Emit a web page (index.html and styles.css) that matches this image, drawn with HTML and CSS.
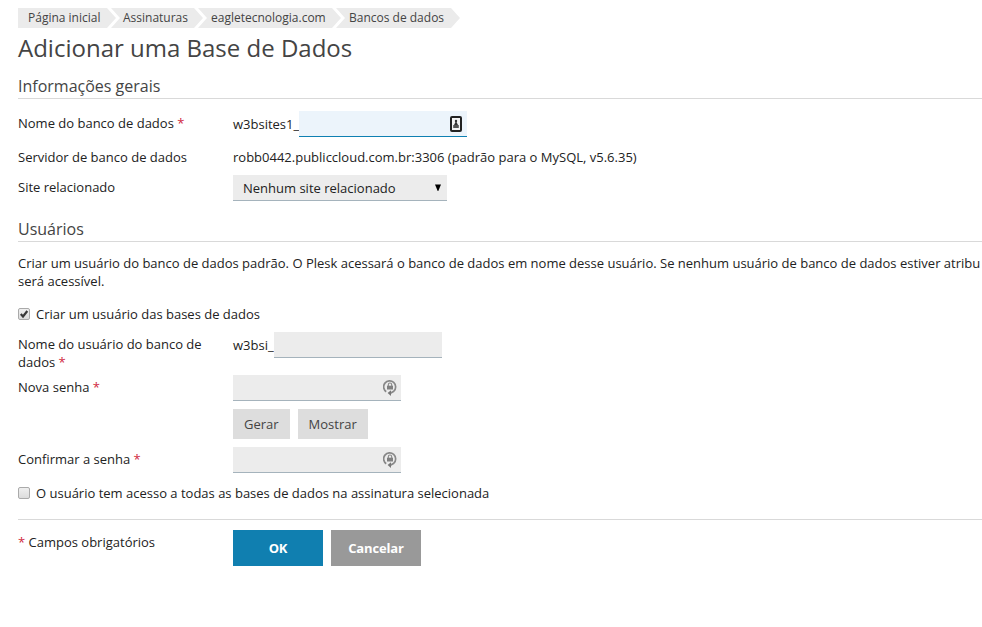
FILE: index.html
```html
<!DOCTYPE html>
<html lang="pt-BR">
<head>
<meta charset="utf-8">
<title>Adicionar uma Base de Dados</title>
<link rel="stylesheet" href="styles.css">
</head>
<body>
<nav class="crumbs">
  <a class="crumb crumb-home">Página inicial</a>
  <a class="crumb crumb-subs">Assinaturas</a>
  <a class="crumb crumb-site">eagletecnologia.com</a>
  <a class="crumb crumb-db">Bancos de dados</a>
</nav>
<h1>Adicionar uma Base de Dados</h1>
<form>
  <section class="general">
    <h2>Informações gerais</h2>
    <div class="row row-name">
      <label class="label">Nome do banco de dados <span class="req">*</span></label>
      <div class="value"><span class="prefix">w3bsites1_</span><span class="field focused">
        <svg class="id-icon" viewBox="0 0 12 16"><rect x="1" y="1" width="10" height="14" rx="1" fill="#f4f4f4" stroke="#222" stroke-width="2"/><circle cx="6" cy="5" r="1.2" fill="#333"/><path d="M6 5 8 9H4z" fill="#333"/><path d="M3.2 9h5.6v3H3.2z" fill="#555"/></svg>
      </span></div>
    </div>
    <div class="row row-server">
      <span class="label">Servidor de banco de dados</span>
      <div class="value">robb0442.publiccloud.com.br:3306 (padrão para o MySQL, v5.6.35)</div>
    </div>
    <div class="row row-site">
      <label class="label">Site relacionado</label>
      <div class="select"><span>Nenhum site relacionado</span><svg class="arrow" viewBox="0 0 6 7"><path d="M0 .5h6L3.3 7h-.6z"/></svg></div>
    </div>
  </section>
  <section class="users">
    <h2>Usuários</h2>
    <p class="hint"><span>Criar um usuário do banco de dados padrão. O Plesk acessará o banco de dados em nome desse usuário. Se nenhum usuário de banco de dados estiver atribu</span><br>será acessível.</p>
    <label class="check"><span class="box"><svg viewBox="0 0 12 12"><path d="M2.8 6 5 8.5 9.3 3" fill="none" stroke="#383838" stroke-width="2.2"/></svg></span>Criar um usuário das bases de dados</label>
    <div class="row row-user">
      <label class="label">Nome do usuário do banco de dados <span class="req">*</span></label>
      <div class="value"><span class="prefix">w3bsi_</span><span class="field"></span></div>
    </div>
    <div class="row row-pass">
      <label class="label">Nova senha <span class="req">*</span></label>
      <div class="value"><span class="field secret">
        <svg class="lock-icon" viewBox="0 0 14 17"><path d="M3.2 12.8A6 6 0 1 1 10.8 12.2L7 14.5" fill="none" stroke="#888" stroke-width="1.7"/><path d="M8 11.2V17l-3.4-2.9z" fill="#777"/><path d="M5.3 7V5.7a1.7 1.7 0 0 1 3.4 0V7" fill="none" stroke="#888" stroke-width="1.1"/><path d="M4 6.7h6v3.8H4z" fill="#808080"/></svg>
      </span></div>
    </div>
    <div class="tools"><button type="button">Gerar</button><button type="button">Mostrar</button></div>
    <div class="row row-confirm">
      <label class="label">Confirmar a senha <span class="req">*</span></label>
      <div class="value"><span class="field secret">
        <svg class="lock-icon" viewBox="0 0 14 17"><path d="M3.2 12.8A6 6 0 1 1 10.8 12.2L7 14.5" fill="none" stroke="#888" stroke-width="1.7"/><path d="M8 11.2V17l-3.4-2.9z" fill="#777"/><path d="M5.3 7V5.7a1.7 1.7 0 0 1 3.4 0V7" fill="none" stroke="#888" stroke-width="1.1"/><path d="M4 6.7h6v3.8H4z" fill="#808080"/></svg>
      </span></div>
    </div>
    <label class="check"><span class="box"></span>O usuário tem acesso a todas as bases de dados na assinatura selecionada</label>
  </section>
  <footer class="row">
    <span class="label"><span class="req">*</span> Campos obrigatórios</span>
    <div class="actions"><button type="button" class="ok">OK</button><button type="button" class="cancel">Cancelar</button></div>
  </footer>
</form>
</body>
</html>
```
FILE: styles.css
```css
* { box-sizing: border-box; }
body {
  margin: 0;
  padding: 8px 0 0 18px;
  overflow: hidden;
  background: #fff;
  color: #222;
  font: 13px/18px "Open Sans", sans-serif;
}
.crumbs { display: flex; height: 20px; }
.crumb {
  height: 20px;
  padding-left: 13px;
  margin-left: -5px;
  background: #ebebeb;
  color: #444;
  font-size: 12px;
  line-height: 20px;
  white-space: nowrap;
  clip-path: polygon(0 0, calc(100% - 9px) 0, 100% 50%, calc(100% - 9px) 100%, 0 100%, 9px 50%);
}
.crumb-home {
  width: 98px;
  margin-left: 0;
  padding-left: 10px;
  clip-path: polygon(0 0, calc(100% - 9px) 0, 100% 50%, calc(100% - 9px) 100%, 0 100%);
}
.crumb-subs { width: 92px; padding-left: 12px; }
.crumb-site { width: 143px; }
.crumb-db { width: 124px; }
h1 {
  margin: 3px 0 0;
  color: #444;
  font-size: 24px;
  font-weight: 400;
  line-height: 34px;
}
h2 {
  width: 964px;
  height: 25px;
  margin: 0;
  border-bottom: 1px solid #d9d9d9;
  color: #444;
  font-size: 16px;
  font-weight: 400;
  line-height: 24px;
}
.general { margin-top: 9px; }
.row { display: flex; }
.label { width: 215px; padding-right: 20px; }
.value { display: flex; }
.req { color: #d02840; }
.prefix { line-height: 27px; }
.field {
  display: flex;
  justify-content: flex-end;
  width: 168px;
  height: 26px;
  padding: 5px 5px 0;
  background: #ececec;
  border-bottom: 1px solid #a5b3bc;
}
.focused { background: #ecf4fb; border-color: #0f80b2; }
.secret { padding: 4px 4px 0; }
.id-icon { width: 12px; height: 16px; }
.lock-icon { width: 14px; height: 17px; }
.row-name { margin-top: 12px; height: 26px; }
.row-name .label { padding-top: 3px; }
.row-server { margin-top: 11px; }
.row-site { margin-top: 9px; height: 26px; }
.row-site .label { padding-top: 3px; }
.select {
  display: flex;
  align-items: center;
  justify-content: space-between;
  width: 214px;
  height: 26px;
  padding: 0 6px 0 10px;
  background: #ececec;
  border-bottom: 1px solid #a5b3bc;
}
.arrow { width: 6px; height: 7px; fill: #000; }
.users { margin-top: 16px; }
.hint { margin: 12px 0 0; white-space: nowrap; }
.check { display: flex; align-items: center; margin-top: 15px; }
.box {
  display: flex;
  width: 12px;
  height: 12px;
  margin-right: 6px;
  background: linear-gradient(#efefef, #dcdcdc);
  border: 1px solid #aaa;
  border-radius: 2px;
}
.box svg { flex: none; width: 12px; height: 12px; margin: -1px; overflow: visible; }
.row-user { margin-top: 9px; height: 39px; }
.row-user .label { padding-top: 3px; }
.row-pass { margin-top: 4px; height: 26px; }
.row-pass .label, .row-confirm .label { padding-top: 3px; }
.tools { display: flex; gap: 8px; margin: 8px 0 8px 215px; }
button {
  height: 30px;
  padding: 0 11px;
  border: 0;
  background: #ddd;
  color: #444;
  font: 13px/30px "Open Sans", sans-serif;
}
.row-confirm { height: 26px; }
.row-confirm + .check { margin-top: 11px; }
footer { width: 964px; margin-top: 17px; padding-top: 10px; border-top: 1px solid #d9d9d9; }
footer .label { padding-top: 3px; }
.actions { display: flex; gap: 8px; }
.actions button { width: 90px; height: 36px; color: #fff; font-weight: 700; letter-spacing: -0.15px; }
.actions .ok { background: #107fb0; }
.actions .cancel { background: #999; }
```
